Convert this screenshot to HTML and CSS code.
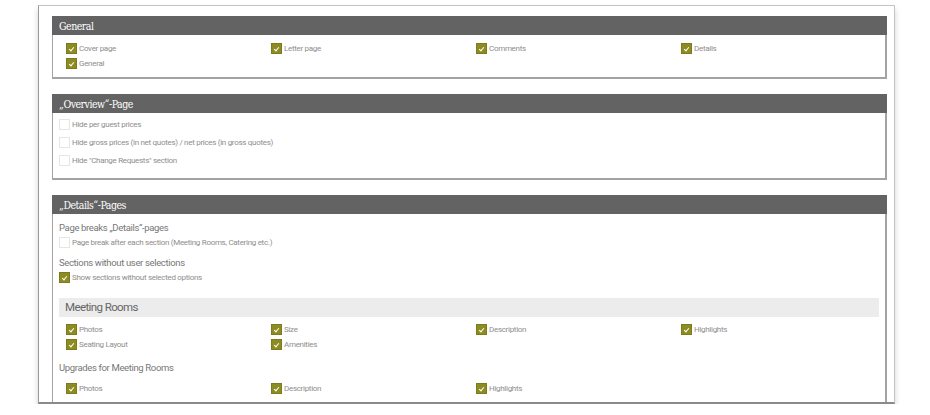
FILE: index.html
```html
<!DOCTYPE html>
<html>
<head>
  <title>PDF Settings</title>
  <link rel="stylesheet" href="styles.css">
</head>
<body>
  <div class="sheet">
    <div class="panel">
      <div class="panel-head">General</div>
      <div class="panel-body wide">
        <div class="grid">
          <label class="opt"><span class="box on"></span>Cover page</label>
          <label class="opt"><span class="box on"></span>Letter page</label>
          <label class="opt"><span class="box on"></span>Comments</label>
          <label class="opt"><span class="box on"></span>Details</label>
          <label class="opt"><span class="box on"></span>General</label>
        </div>
      </div>
    </div>

    <div class="panel">
      <div class="panel-head">„Overview“-Page</div>
      <div class="panel-body overview">
        <label class="opt tall"><span class="box"></span>Hide per guest prices</label>
        <label class="opt tall"><span class="box"></span>Hide gross prices (in net quotes) / net prices (in gross quotes)</label>
        <label class="opt tall"><span class="box"></span>Hide "Change Requests" section</label>
      </div>
    </div>

    <div class="panel">
      <div class="panel-head">„Details“-Pages</div>
      <div class="panel-body details">
        <div class="sub">Page breaks „Details“-pages</div>
        <label class="opt"><span class="box"></span>Page break after each section (Meeting Rooms, Catering etc.)</label>
        <div class="sub gap">Sections without user selections</div>
        <label class="opt"><span class="box on"></span>Show sections without selected options</label>

        <div class="bar">Meeting Rooms</div>
        <div class="grid inset">
          <label class="opt"><span class="box on"></span>Photos</label>
          <label class="opt"><span class="box on"></span>Size</label>
          <label class="opt"><span class="box on"></span>Description</label>
          <label class="opt"><span class="box on"></span>Highlights</label>
          <label class="opt"><span class="box on"></span>Seating Layout</label>
          <label class="opt"><span class="box on"></span>Amenities</label>
        </div>

        <div class="sub upgrades">Upgrades for Meeting Rooms</div>
        <div class="grid inset first">
          <label class="opt"><span class="box on"></span>Photos</label>
          <label class="opt"><span class="box on"></span>Description</label>
          <label class="opt"><span class="box on"></span>Highlights</label>
        </div>
      </div>
    </div>
  </div>
</body>
</html>
```

FILE: styles.css
```css
body {
  font-family: 'Roboto', 'Liberation Sans', sans-serif;
  background-color: #fff;
  margin: 0;
  padding: 0;
}
.sheet {
  box-sizing: border-box;
  width: 857px;
  height: 399px;
  margin: 5px 0 0 38px;
  padding: 10px 7px 0 13px;
  border: 1px solid #c4c4c4;
  border-left-color: #9a9a9a;
  border-bottom: 2px solid #8a8a8a;
  overflow: hidden;
  box-shadow: 0 4px 6px rgba(0, 0, 0, 0.18);
}
.panel {
  margin-bottom: 15px;
}
.panel-head {
  height: 19px;
  line-height: 20px;
  padding-left: 7px;
  background-color: #636363;
  color: #fff;
  font-family: 'DejaVu Serif Condensed', 'DejaVu Serif', serif;
  font-size: 10.5px;
  letter-spacing: -0.5px;
}
.panel-body {
  border: 1px solid #a3a3a3;
  border-top: none;
  border-right-width: 2px;
  border-bottom-width: 2px;
  padding: 6px 6px 7px 6px;
}
.panel-body.wide {
  padding: 6px 13px 6px 13px;
}
.panel-body.overview {
  padding: 2px 6px 9px 6px;
}
.grid {
  display: grid;
  grid-template-columns: repeat(4, 205px);
}
.grid.inset {
  margin-left: 7px;
  margin-top: 5px;
}
.grid.first {
  margin-top: 6px;
}
.opt {
  display: flex;
  align-items: center;
  height: 15px;
  font-size: 8px;
  letter-spacing: -0.3px;
  color: #8e8e8e;
}
.opt.tall {
  height: 18px;
}
.box {
  box-sizing: border-box;
  position: relative;
  width: 11px;
  height: 11px;
  margin-right: 2px;
  border: 1px solid #e6e6e6;
  background-color: #fff;
  flex-shrink: 0;
}
.box.on {
  background-color: #8c8c22;
  border-color: #7c7c1c;
}
.box.on::after {
  content: '';
  position: absolute;
  left: 3px;
  top: 2px;
  width: 2px;
  height: 4px;
  border: solid #fff;
  border-width: 0 1.5px 1.5px 0;
  transform: rotate(40deg);
}
.sub {
  height: 15px;
  line-height: 15px;
  font-size: 9.5px;
  letter-spacing: -0.35px;
  color: #777;
}
.sub.gap {
  margin-top: 5px;
}
.sub.upgrades {
  margin-top: 8px;
}
.bar {
  margin-top: 13px;
  height: 19px;
  line-height: 19px;
  padding-left: 6px;
  background-color: #ececec;
  font-size: 11.5px;
  letter-spacing: -0.6px;
  color: #666;
}
```
